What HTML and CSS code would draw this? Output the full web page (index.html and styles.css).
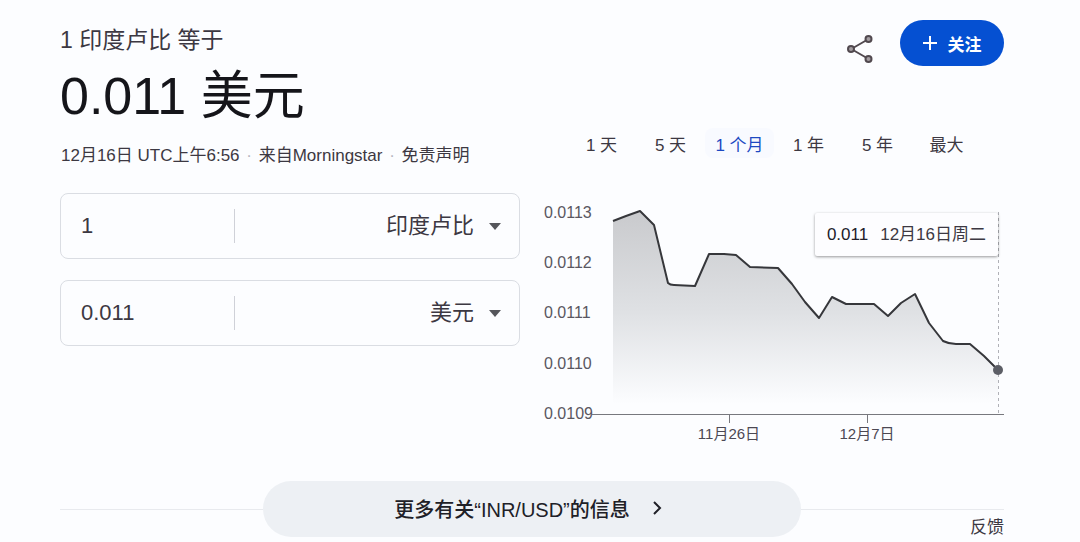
FILE: index.html
```
<!DOCTYPE html>
<html lang="zh-CN">
<head>
  <meta charset="UTF-8" />
  <meta name="viewport" content="width=device-width, initial-scale=1.0" />
  <title>印度卢比 - 美元</title>
  <link rel="stylesheet" href="styles.css">
</head>
<body>
  <main class="converter">
    <header class="header">
      <div>
        <p class="from">1 印度卢比 等于</p>
        <h1 class="rate">0.011 美元</h1>
      </div>
      <div class="actions">
        <button class="share-btn" aria-label="分享">
          <svg width="28" height="30" viewBox="0 0 28 30" fill="none" stroke="#51494f" stroke-width="2">
            <path d="M7 14 L20 6.500 M7 16 L20 23.500" />
            <circle cx="5" cy="15" r="3" fill="#a39da1" />
            <circle cx="22.500" cy="5" r="3" fill="#a39da1" />
            <circle cx="22.500" cy="25" r="3" fill="#a39da1" />
          </svg>
        </button>
        <button class="follow-btn">
          <svg width="14" height="14" viewBox="0 0 14 14" stroke="#fff" stroke-width="2"><path d="M7 0v14M0 7h14" /></svg>
          关注
        </button>
      </div>
    </header>

    <div class="content">
      <section class="fields">
        <p class="source">12月16日 UTC上午6:56 <span class="dot">·</span> 来自Morningstar <span class="dot">·</span> <a href="#">免责声明</a></p>
        <div class="field">
          <input class="amount" type="text" value="1" aria-label="印度卢比金额" />
          <select class="currency" aria-label="原货币">
            <option>印度卢比</option>
            <option>美元</option>
          </select>
          <svg class="arrow" width="12" height="7" viewBox="0 0 12 7"><path d="M0 0h12L6 7z" fill="#55565b" /></svg>
        </div>
        <div class="field">
          <input class="amount" type="text" value="0.011" aria-label="美元金额" />
          <select class="currency" aria-label="目标货币">
            <option>美元</option>
            <option>印度卢比</option>
          </select>
          <svg class="arrow" width="12" height="7" viewBox="0 0 12 7"><path d="M0 0h12L6 7z" fill="#55565b" /></svg>
        </div>
      </section>

      <section class="history">
        <nav class="ranges">
          <button class="range">1 天</button>
          <button class="range">5 天</button>
          <button class="range selected">1 个月</button>
          <button class="range">1 年</button>
          <button class="range">5 年</button>
          <button class="range">最大</button>
        </nav>
        <div class="chart">
          <svg class="plot" viewBox="0 0 460 245">
            <defs>
              <linearGradient id="fade" x1="0" y1="0" x2="0" y2="1">
                <stop offset="0" stop-color="#c9cacd" />
                <stop offset="0.5" stop-color="#dfe1e4" />
                <stop offset="0.95" stop-color="#fcfdff" />
              </linearGradient>
            </defs>
            <g class="y-labels">
              <text x="0" y="18">0.0113</text>
              <text x="0" y="68">0.0112</text>
              <text x="0" y="118">0.0111</text>
              <text x="0" y="169">0.0110</text>
              <text x="0" y="219">0.0109</text>
            </g>
            <path fill="url(#fade)" d="M69 21 L82 16 96 11 110 25 124 83 Q126 85 130 85 L151 86 165 54 180 54 192 55 206 67 234 68 248 84 261 102 275 118 288 97 302 104 330 104 344 116 357 103 371 94 385 123 399 141 Q405 144 412 144 L426 144 440 156 454 170 V214 H69 Z" />
            <path class="line" d="M69 21 L82 16 96 11 110 25 124 83 Q126 85 130 85 L151 86 165 54 180 54 192 55 206 67 234 68 248 84 261 102 275 118 288 97 302 104 330 104 344 116 357 103 371 94 385 123 399 141 Q405 144 412 144 L426 144 440 156 454 170" />
            <path class="axis" d="M48 214.500H460 M185.500 214v9 M323.500 214v9" />
            <path class="cursor" d="M454.500 12V214" />
            <circle cx="454" cy="170" r="5" fill="#5c5e66" />
            <g class="x-labels">
              <text x="185" y="239">11月26日</text>
              <text x="323" y="239">12月7日</text>
            </g>
          </svg>
          <div class="tooltip"><b>0.011</b><span>12月16日周二</span></div>
        </div>
      </section>
    </div>

    <footer class="footer">
      <div class="rule"></div>
      <button class="more-btn">
        更多有关“INR/USD”的信息
        <svg width="10" height="14" viewBox="0 0 10 14" fill="none" stroke="#202027" stroke-width="2"><path d="M2 1l6 6-6 6" /></svg>
      </button>
      <div class="rule"><a href="#">反馈</a></div>
    </footer>
  </main>
</body>
</html>
```
FILE: styles.css
```
* {
  box-sizing: border-box;
}
body {
  margin: 0;
  font-family: "Liberation Sans", "Noto Sans CJK SC", sans-serif;
  background: #fcfdff;
  color: #3c3842;
}
button, input, select {
  font-family: inherit;
  color: inherit;
  border: 0;
  background: none;
  padding: 0;
}
button {
  cursor: pointer;
}
a {
  color: inherit;
  text-decoration: none;
}
p, h1 {
  margin: 0;
}
.converter {
  padding: 20px 76px 0 60px;
}
.header {
  display: flex;
  justify-content: space-between;
  align-items: flex-start;
}
.from {
  padding-top: 6px;
  font-size: 23px;
  line-height: 28px;
}
.rate {
  padding-top: 10px;
  font-size: 52px;
  font-weight: 400;
  line-height: 64px;
  color: #15151a;
}
.actions {
  display: flex;
  align-items: center;
  gap: 26px;
}
.share-btn {
  display: flex;
  padding-top: 12px;
}
.follow-btn {
  display: flex;
  align-items: center;
  justify-content: center;
  gap: 11px;
  width: 104px;
  height: 46px;
  border-radius: 23px;
  background: #0550d2;
  color: #fff;
  font-size: 17px;
  font-weight: 700;
}
.content {
  display: grid;
  grid-template-columns: 1fr 1fr;
  gap: 24px;
}
.source {
  padding: 15px 0 0 1px;
  margin-bottom: 24px;
  font-size: 17px;
  line-height: 26px;
  white-space: nowrap;
}
.dot {
  margin: 0 2px;
  color: #b5b7bf;
}
.field {
  display: flex;
  align-items: center;
  height: 66px;
  margin-bottom: 21px;
  padding: 0 18px 0 20px;
  border: 1px solid #dadde3;
  border-radius: 8px;
  font-size: 22px;
}
.amount {
  width: 154px;
  height: 34px;
  border-right: 1px solid #cfd1d8;
  font-size: 22px;
  outline: none;
}
.currency {
  flex: 1;
  appearance: none;
  font-size: 22px;
  line-height: 32px;
  text-align-last: right;
}
.arrow {
  margin-left: 15px;
}
.ranges {
  display: grid;
  grid-template-columns: repeat(6, 1fr);
  padding: 0 23px;
}
.range {
  height: 30px;
  font-size: 17px;
  border-radius: 8px;
}
.range.selected {
  color: #1c49c2;
  background: #f8faff;
}
.chart {
  position: relative;
  margin-top: 42px;
}
.plot {
  display: block;
  width: 100%;
}
.y-labels {
  font-size: 16px;
  fill: #5a5761;
}
.x-labels {
  font-size: 15px;
  fill: #4c4853;
  text-anchor: middle;
}
.line {
  fill: none;
  stroke: #36373b;
  stroke-width: 2;
  stroke-linejoin: round;
}
.axis {
  stroke: #77787e;
}
.cursor {
  stroke: #b0b1b7;
  stroke-dasharray: 3 3;
}
.tooltip {
  position: absolute;
  top: 13px;
  right: 6px;
  display: flex;
  gap: 12px;
  padding: 9px 12px 8px;
  border-radius: 2px;
  background: #fdfdff;
  box-shadow: 0 1px 3px rgba(0, 0, 0, 0.4);
  font-size: 17px;
  line-height: 26px;
  white-space: nowrap;
}
.tooltip b {
  font-weight: 500;
  color: #22202a;
}
.footer {
  display: grid;
  grid-template-columns: 1fr 57% 1fr;
  padding-top: 36px;
}
.more-btn {
  display: flex;
  align-items: center;
  justify-content: center;
  gap: 22px;
  height: 56px;
  padding: 0 8px 2px 0;
  border-radius: 28px;
  background: #edf0f4;
  color: #202027;
  font-size: 20px;
  font-weight: 500;
}
.rule {
  margin-top: 28px;
  padding-top: 5px;
  border-top: 1px solid #e8eaee;
  font-size: 17px;
  line-height: 26px;
  text-align: right;
}
```
